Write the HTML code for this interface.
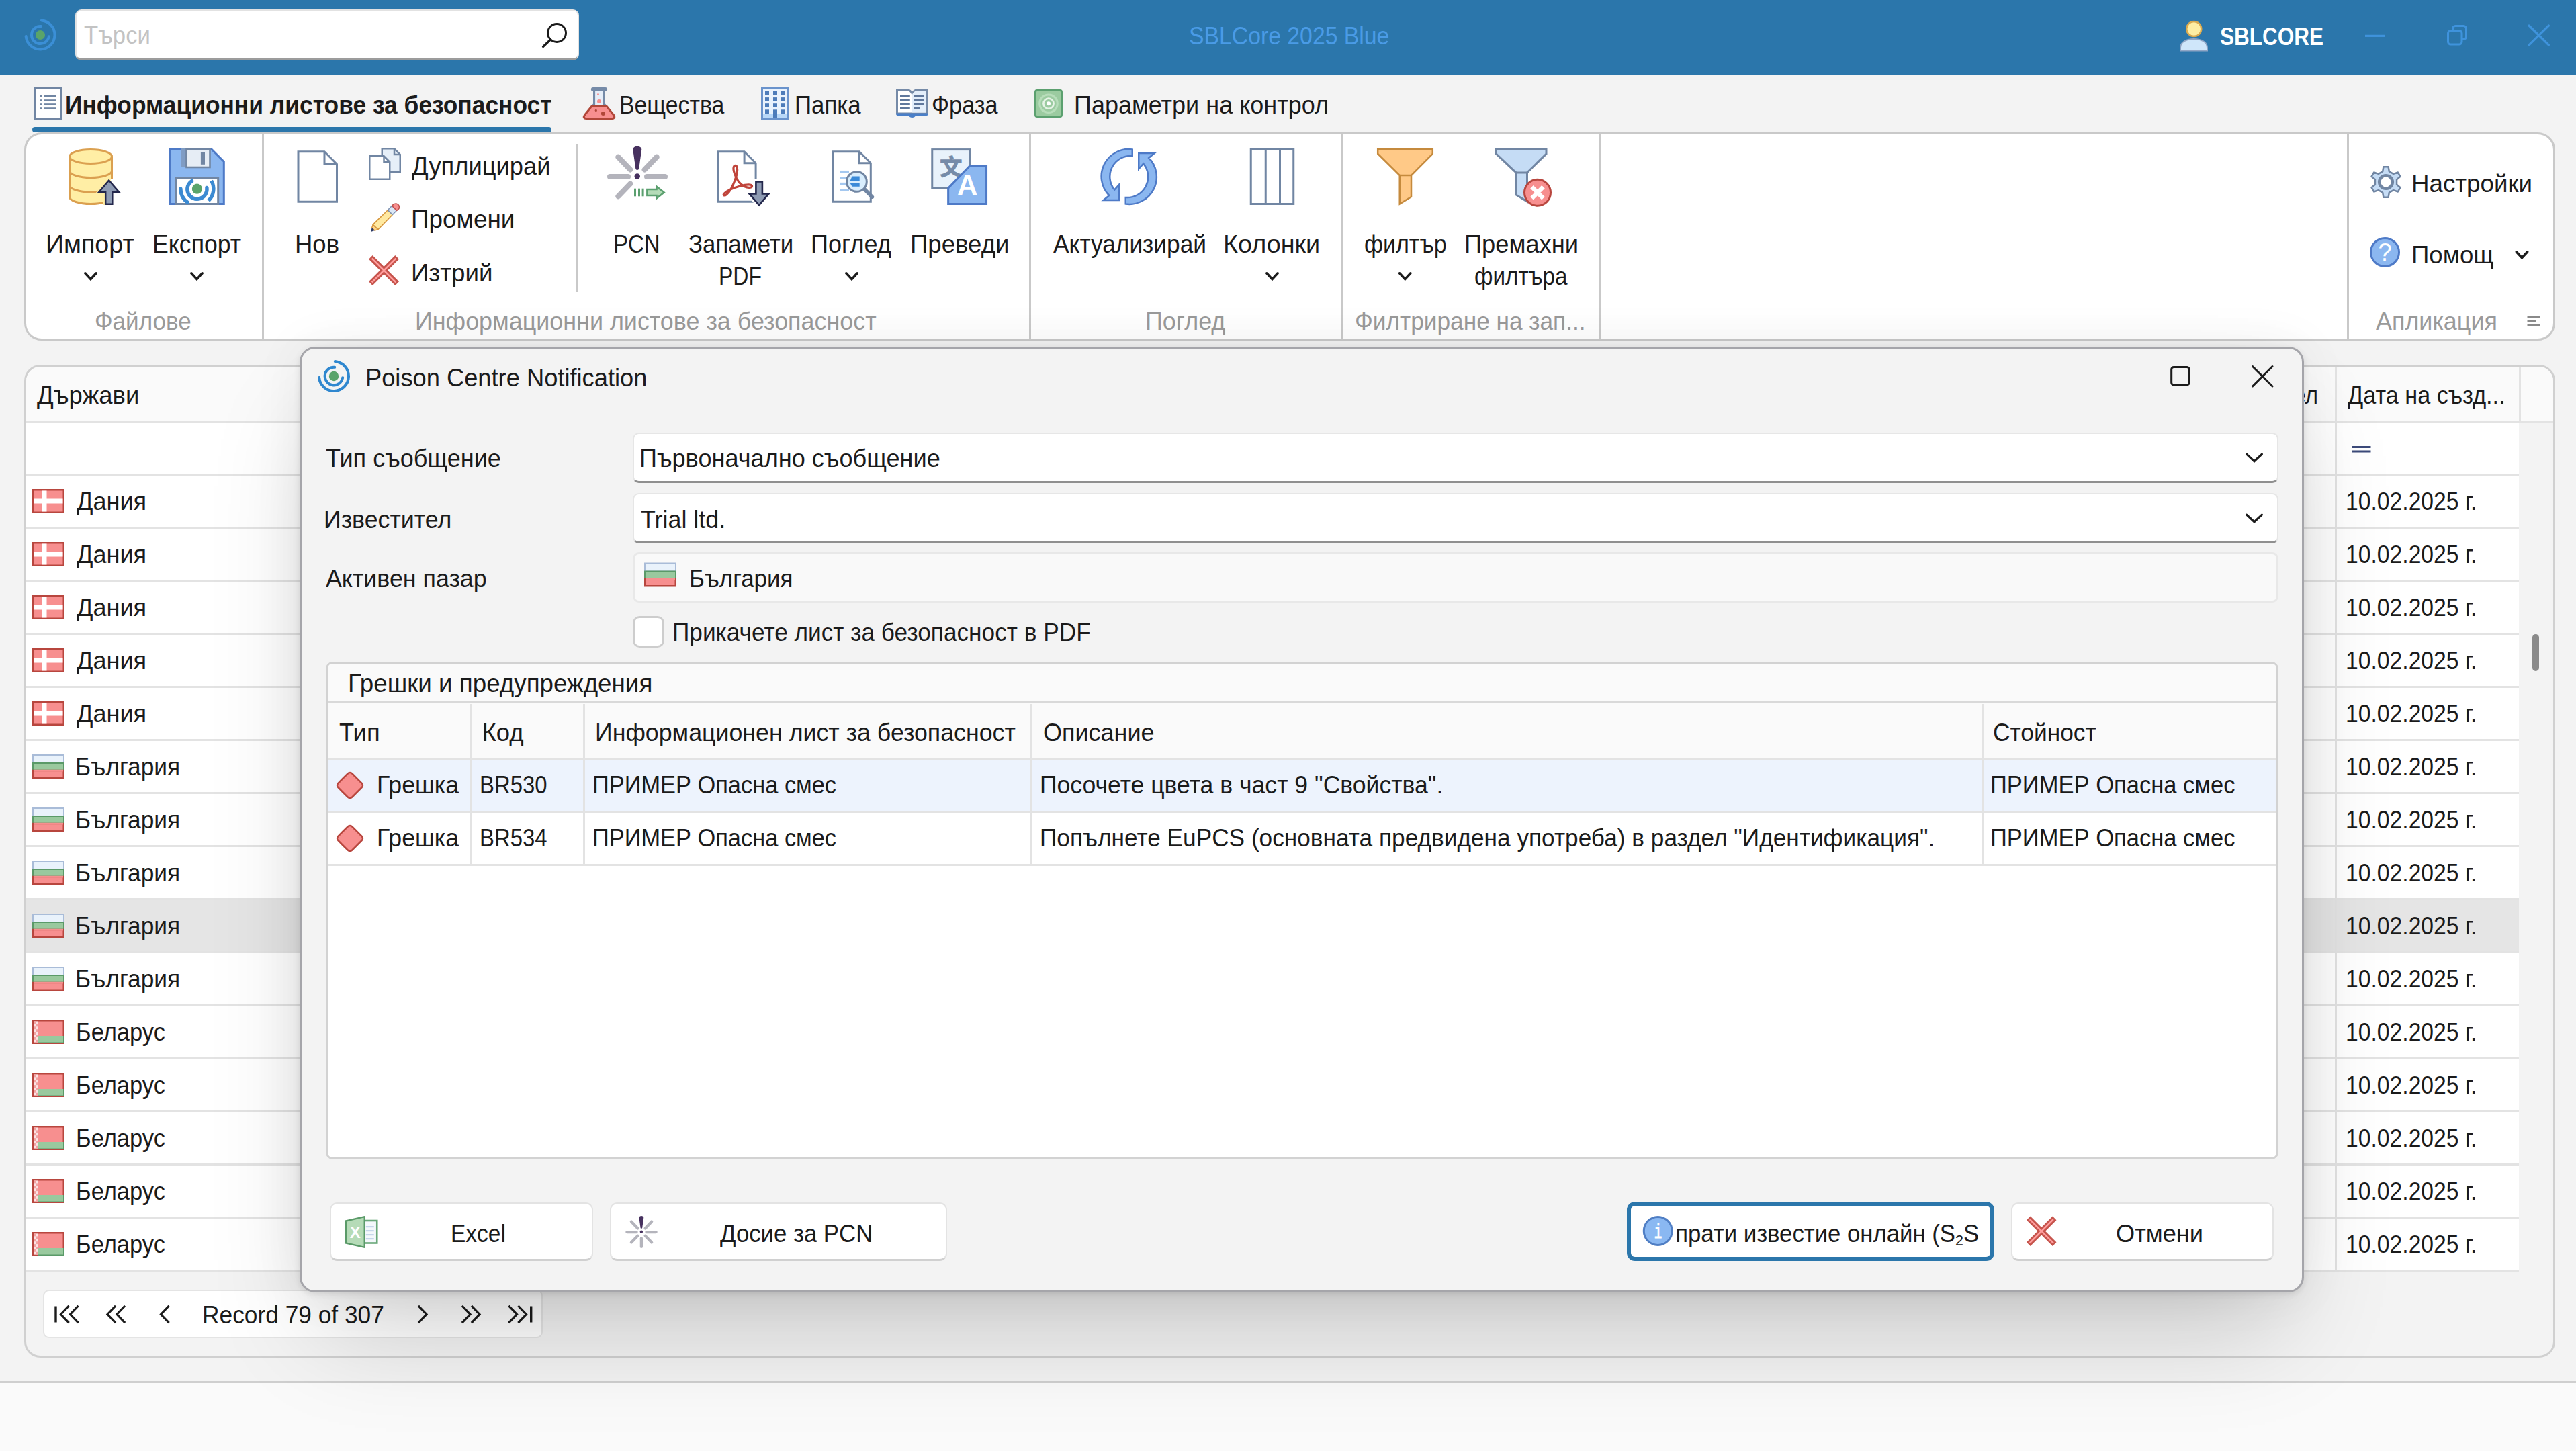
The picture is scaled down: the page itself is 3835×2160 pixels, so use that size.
<!DOCTYPE html><html lang="bg"><head><meta charset="utf-8"><title>SBLCore 2025 Blue</title><style>

html,body{margin:0;padding:0}
html{width:3835px;height:2160px;overflow:hidden}
body{width:3835px;height:2160px;overflow:hidden;background:#f3f3f3;position:relative;font-family:"Liberation Sans", sans-serif;color:#1b1b1b}
.b{position:absolute;box-sizing:border-box}
.t{position:absolute;white-space:pre;line-height:1;transform-origin:0 0;display:block}
svg{position:absolute;left:0;top:0;overflow:visible}
svg text{font-family:"Liberation Sans", sans-serif}
.clip{position:absolute;overflow:hidden}
.pre{position:absolute;right:100%}
.suf{position:absolute;left:100%}

</style></head><body>
<!-- background window -->
<div class="b" style="left:0px;top:0px;width:3835px;height:112px;background:#2b76ab"></div>
<div class="b" style="left:112px;top:14px;width:750px;height:75.5px;background:#fff;border-radius:9px;border:2px solid #e2e2e2;border-bottom:3px solid #9c9c9c"></div>
<div class="b" style="left:48px;top:188.5px;width:773px;height:8.0px;background:#2b76ab;border-radius:4px"></div>
<div class="b" style="left:36px;top:197px;width:3768px;height:309.5px;background:#fff;border:3px solid #c9c9c9;border-radius:26px"></div>
<div class="b" style="left:390px;top:200px;width:3px;height:303.5px;background:#c9c9c9"></div>
<div class="b" style="left:1532px;top:200px;width:3px;height:303.5px;background:#c9c9c9"></div>
<div class="b" style="left:1996px;top:200px;width:3px;height:303.5px;background:#c9c9c9"></div>
<div class="b" style="left:2380px;top:200px;width:3px;height:303.5px;background:#c9c9c9"></div>
<div class="b" style="left:3494px;top:200px;width:3px;height:303.5px;background:#c9c9c9"></div>
<div class="b" style="left:857px;top:214px;width:3px;height:220px;background:#c9c9c9"></div>
<div class="b" style="left:36px;top:543px;width:3768px;height:1477.5px;background:#f3f3f3;border:3px solid #d0d0d0;border-radius:24px;overflow:hidden"><div class="b" style="left:0px;top:0px;width:3762px;height:80px;background:#fafafa"></div><div class="b" style="left:0px;top:80px;width:3762px;height:3px;background:#e3e3e3"></div><div class="b" style="left:3437px;top:0px;width:3px;height:80px;background:#e3e3e3"></div><div class="b" style="left:3711px;top:0px;width:3px;height:80px;background:#e3e3e3"></div><div class="b" style="left:0px;top:83px;width:3711px;height:76px;background:#fff"></div><div class="b" style="left:0px;top:159px;width:3711px;height:3px;background:#e3e3e3"></div><div class="b" style="left:0px;top:162px;width:3711px;height:76px;background:#fff"></div><div class="b" style="left:0px;top:238px;width:3711px;height:3px;background:#e3e3e3"></div><div class="b" style="left:0px;top:241px;width:3711px;height:76px;background:#fff"></div><div class="b" style="left:0px;top:317px;width:3711px;height:3px;background:#e3e3e3"></div><div class="b" style="left:0px;top:320px;width:3711px;height:76px;background:#fff"></div><div class="b" style="left:0px;top:396px;width:3711px;height:3px;background:#e3e3e3"></div><div class="b" style="left:0px;top:399px;width:3711px;height:76px;background:#fff"></div><div class="b" style="left:0px;top:475px;width:3711px;height:3px;background:#e3e3e3"></div><div class="b" style="left:0px;top:478px;width:3711px;height:76px;background:#fff"></div><div class="b" style="left:0px;top:554px;width:3711px;height:3px;background:#e3e3e3"></div><div class="b" style="left:0px;top:557px;width:3711px;height:76px;background:#fff"></div><div class="b" style="left:0px;top:633px;width:3711px;height:3px;background:#e3e3e3"></div><div class="b" style="left:0px;top:636px;width:3711px;height:76px;background:#fff"></div><div class="b" style="left:0px;top:712px;width:3711px;height:3px;background:#e3e3e3"></div><div class="b" style="left:0px;top:715px;width:3711px;height:76px;background:#fff"></div><div class="b" style="left:0px;top:791px;width:3711px;height:3px;background:#e3e3e3"></div><div class="b" style="left:0px;top:794px;width:3711px;height:76px;background:#e5e5e5"></div><div class="b" style="left:0px;top:870px;width:3711px;height:3px;background:#e3e3e3"></div><div class="b" style="left:0px;top:873px;width:3711px;height:76px;background:#fff"></div><div class="b" style="left:0px;top:949px;width:3711px;height:3px;background:#e3e3e3"></div><div class="b" style="left:0px;top:952px;width:3711px;height:76px;background:#fff"></div><div class="b" style="left:0px;top:1028px;width:3711px;height:3px;background:#e3e3e3"></div><div class="b" style="left:0px;top:1031px;width:3711px;height:76px;background:#fff"></div><div class="b" style="left:0px;top:1107px;width:3711px;height:3px;background:#e3e3e3"></div><div class="b" style="left:0px;top:1110px;width:3711px;height:76px;background:#fff"></div><div class="b" style="left:0px;top:1186px;width:3711px;height:3px;background:#e3e3e3"></div><div class="b" style="left:0px;top:1189px;width:3711px;height:76px;background:#fff"></div><div class="b" style="left:0px;top:1265px;width:3711px;height:3px;background:#e3e3e3"></div><div class="b" style="left:0px;top:1268px;width:3711px;height:76px;background:#fff"></div><div class="b" style="left:0px;top:1344px;width:3711px;height:3px;background:#e3e3e3"></div><div class="b" style="left:3437px;top:83px;width:3px;height:1264px;background:#e3e3e3"></div><div class="b" style="left:3731px;top:398px;width:10px;height:55px;background:#8a8a8a;border-radius:5px"></div><div class="b" style="left:25px;top:1374px;width:744px;height:72px;background:#fff;border:2.5px solid #e4e4e4;border-radius:9px"></div></div>
<div class="b" style="left:0px;top:2059px;width:3835px;height:101px;background:#fafafa"></div>
<div class="b" style="left:0px;top:2056px;width:3835px;height:3px;background:#cfcfcf"></div>
<svg width="3835" height="2160" viewBox="0 0 3835 2160"><g transform="translate(60,52)"><path d="M1.87,-21.42A21.50,21.50 0 1 1 -21.42,1.87" fill="none" stroke="#3b8fd6" stroke-width="4.00" stroke-linecap="round"/><path d="M12.84,2.26A13.04,13.04 0 1 1 1.14,-12.99" fill="none" stroke="#3b8fd6" stroke-width="4.00" stroke-linecap="round"/><circle r="7.05" fill="#5aa46a"/></g>
<circle cx="829" cy="49" r="13.5" fill="none" stroke="#1b1b1b" stroke-width="3"/><line x1="819.5" y1="59" x2="808.5" y2="69.5" stroke="#1b1b1b" stroke-width="3.2" stroke-linecap="round"/>
<g transform="translate(3245,31)"><path d="M1,44.5V40C1,32 9,27 21,27S41,32 41,40V44.5Z" fill="#cfe6fa" stroke="#8fa5c5" stroke-width="2"/><circle cx="21.25" cy="12" r="11" fill="#ffeea3" stroke="#d9a94f" stroke-width="2.5"/></g>
<rect x="3521" y="51.75" width="30" height="3.2" fill="#3f93dc"/>
<rect x="3651.5" y="38.5" width="20" height="20" rx="4" fill="none" stroke="#3f93dc" stroke-width="3"/>
<rect x="3644.5" y="45.5" width="20.5" height="20.5" rx="4" fill="#2b76ab" stroke="#3f93dc" stroke-width="3"/>
<path d="M3765,38L3794.5,67M3794.5,38L3765,67" stroke="#3f93dc" stroke-width="3.2" stroke-linecap="round"/>
<g transform="translate(50,130)"><rect x="1.5" y="1.5" width="39" height="45" fill="#fff" stroke="#7186a3" stroke-width="3"/><rect x="9" y="11.7" width="3" height="2.8" fill="#7186a3"/><rect x="15" y="11.7" width="18" height="2.8" fill="#7186a3"/><rect x="9" y="18.2" width="3" height="2.8" fill="#7186a3"/><rect x="15" y="18.2" width="18" height="2.8" fill="#7186a3"/><rect x="9" y="24.2" width="3" height="2.8" fill="#7186a3"/><rect x="15" y="24.2" width="18" height="2.8" fill="#7186a3"/><rect x="9" y="30.2" width="3" height="2.8" fill="#7186a3"/><rect x="15" y="30.2" width="18" height="2.8" fill="#7186a3"/></g>
<g transform="translate(867.5,130)"><rect x="18.5" y="4" width="12" height="25" fill="#e6eef8"/><rect x="15.5" y="4" width="3.1" height="22" fill="#768ba8"/><rect x="30.4" y="4" width="3.1" height="22" fill="#768ba8"/><path d="M15.5,24.5L11.5,29H16L18.6,26Z" fill="#768ba8"/><path d="M33.5,24.5L37.5,29H33L30.4,26Z" fill="#768ba8"/><rect x="12.4" y="0" width="24.2" height="6" rx="3" fill="#768ba8"/><path d="M13,28.6H36L46.3,41.5C48.3,44.5 46.5,46.5 44,46.5H5C2.5,46.5 0.7,44.5 2.7,41.5Z" fill="#f78f8f" stroke="#b04638" stroke-width="3" stroke-linejoin="round"/><circle cx="24.5" cy="21" r="3" fill="#f78f8f"/><circle cx="23" cy="10.5" r="1.5" fill="#f78f8f"/><circle cx="30.4" cy="39" r="3" fill="#b04638"/><circle cx="19.8" cy="34.4" r="1.6" fill="#b04638"/></g>
<g transform="translate(1133,130)"><rect x="1.5" y="1.5" width="39" height="45" fill="#e8f2fd" stroke="#6a93cc" stroke-width="3"/><rect x="3" y="39" width="36" height="6" fill="#b9d8f8"/><rect x="6" y="6.0" width="6" height="5.8" fill="#4d7cba"/><rect x="18" y="6.0" width="6" height="5.8" fill="#4d7cba"/><rect x="30" y="6.0" width="6" height="5.8" fill="#4d7cba"/><rect x="6" y="15.1" width="6" height="5.8" fill="#4d7cba"/><rect x="18" y="15.1" width="6" height="5.8" fill="#4d7cba"/><rect x="30" y="15.1" width="6" height="5.8" fill="#4d7cba"/><rect x="6" y="24.2" width="6" height="5.8" fill="#4d7cba"/><rect x="18" y="24.2" width="6" height="5.8" fill="#4d7cba"/><rect x="30" y="24.2" width="6" height="5.8" fill="#4d7cba"/><rect x="6" y="33.3" width="6" height="5.8" fill="#4d7cba"/><rect x="30" y="33.3" width="6" height="5.8" fill="#4d7cba"/><rect x="18" y="33.3" width="6" height="11.7" fill="#4d7cba"/></g>
<g transform="translate(1334,132.5)"><path d="M1.5,1.5H17C20,1.5 22,3 24,6.5C26,3 28,1.5 31,1.5H46.5V36.5H1.5Z" fill="#fff" stroke="#768ba8" stroke-width="3" stroke-linejoin="miter"/><path d="M24,8C26,4.5 28,3 31,3H45V35H24Z" fill="#e3eefa"/><path d="M0.3,36H47.7V37.5C47.7,38.8 46.8,39.5 45.5,39.5H29C28,43.4 20,43.4 19,39.5H2.5C1.2,39.5 0.3,38.8 0.3,37.5Z" fill="#4a7fc8"/><rect x="6" y="9.5" width="14.8" height="3" fill="#60789c"/><rect x="27" y="9.5" width="14.8" height="3" fill="#60789c"/><rect x="6" y="15.5" width="14.8" height="3" fill="#60789c"/><rect x="27" y="15.5" width="14.8" height="3" fill="#60789c"/><rect x="6" y="21.5" width="14.8" height="3" fill="#60789c"/><rect x="27" y="21.5" width="14.8" height="3" fill="#60789c"/><rect x="6" y="27.5" width="14.8" height="3" fill="#60789c"/><rect x="27" y="27.5" width="8.8" height="3" fill="#60789c"/></g>
<g transform="translate(1540,133)"><rect x="1.5" y="1.5" width="39" height="39" rx="2.5" fill="#9bcba0" stroke="#5ba06f" stroke-width="3"/><circle cx="21" cy="21.2" r="13.2" fill="none" stroke="#b7ddba" stroke-width="3.2"/><circle cx="21" cy="21.2" r="7.6" fill="none" stroke="#e6f3e6" stroke-width="2.6"/><circle cx="21" cy="21.2" r="3" fill="#fff"/></g>
<g transform="translate(100,221)"><path d="M3.5,12V72C3.5,78 18,82.5 35,82.5S66.5,78 66.5,72V12" fill="#ffeea5" stroke="#dba050" stroke-width="3"/><ellipse cx="35" cy="12" rx="31.5" ry="10.5" fill="#ffeea5" stroke="#dba050" stroke-width="3"/><path d="M3.5,33C3.5,39 18,43.5 35,43.5S66.5,39 66.5,33" fill="none" stroke="#dba050" stroke-width="3"/><path d="M3.5,54.5C3.5,60.5 18,65 35,65S66.5,60.5 66.5,54.5" fill="none" stroke="#dba050" stroke-width="3"/><rect x="64.5" y="46" width="4" height="39" fill="#fff"/><path d="M62.2,43.5L65,46.7V84H53.7V68.3H41Z" fill="#ffeea5"/><path d="M62.2,47.5L77,64.8H67.3V82.8H57.2V64.8H47.5Z" fill="#8e9bb3" stroke="#23274c" stroke-width="2.5" stroke-linejoin="miter"/></g>
<g transform="translate(251,221)"><path d="M1.5,1.5H64.3L82.3,19.5V82.5H1.5Z" fill="#8bb7f0" stroke="#4e7ac7" stroke-width="3"/><rect x="18.2" y="0" width="9" height="28" fill="#7f9cc4"/><rect x="26.5" y="1.3" width="35" height="26.7" fill="#e6edf5" stroke="#7186a3" stroke-width="2.6"/><rect x="47.9" y="6" width="6.1" height="17.8" fill="#7186a3"/><rect x="10.6" y="43.5" width="63.1" height="39" fill="#fff" stroke="#7186a3" stroke-width="3"/><circle cx="42.4" cy="60.2" r="7.6" fill="#5aa46a"/><path d="M34.6,48.4A14.6,14.6 0 1 0 56.9,58.5" fill="none" stroke="#3b8ad2" stroke-width="5.4" stroke-linecap="round"/><path d="M17.9,60.2A24.5,24.5 0 0 0 28.3,80.3" fill="none" stroke="#3b8ad2" stroke-width="5.4" stroke-linecap="round"/><path d="M63.6,48A24.5,24.5 0 0 1 59.4,77.8" fill="none" stroke="#3b8ad2" stroke-width="5.4" stroke-linecap="butt"/></g>
<g transform="translate(442.5,224.25)"><path d="M1.5,1.5H40.5L59.0,20V76.0H1.5Z" fill="#fff" stroke="#7186a3" stroke-width="3" stroke-linejoin="miter"/><path d="M40.5,1.5V20H59.0" fill="none" stroke="#7186a3" stroke-width="3"/></g>
<g transform="translate(549,220)"><g transform="translate(18.5,0)"><path d="M1.25,1.25H19.5L28.25,10V36.25H1.25Z" fill="#e6eff8" stroke="#7186a3" stroke-width="2.5" stroke-linejoin="miter"/><path d="M19.5,1.25V10H28.25" fill="none" stroke="#7186a3" stroke-width="2.5"/></g><g transform="translate(0,11)"><path d="M1.25,1.25H22.5L31.25,10V35.75H1.25Z" fill="#fff" stroke="#7186a3" stroke-width="2.5" stroke-linejoin="miter"/><path d="M22.5,1.25V10H31.25" fill="none" stroke="#7186a3" stroke-width="2.5"/></g></g>
<g transform="translate(551,302.5)"><path d="M2.6,36.8L4.2,31.9L12,39L6.8,40.6Z" fill="#ffd58a" stroke="#d6963c" stroke-width="1.4" stroke-linejoin="round"/><path d="M1.1,42.5L2.7,36.6L7,40.6Z" fill="#2d3a66"/><path d="M4.2,31.9L26.3,10.2L33.4,17L12,39Z" fill="#ffe9a0" stroke="#d6963c" stroke-width="1.6" stroke-linejoin="round"/><path d="M26.3,10.2L32.5,3.8L39.6,10.8L33.4,17Z" fill="#dbe7f6" stroke="#7f93b3" stroke-width="1.6" stroke-linejoin="round"/><path d="M32.5,3.8L34.5,1.9C37,-0.4 41,0.3 42.6,3C44,5.5 43.5,8 41.5,9.5L39.6,10.8Z" fill="#f78f8f" stroke="#c0504d" stroke-width="1.6" stroke-linejoin="round"/></g>
<g transform="translate(549,380)"><g transform="translate(22.5,22.5) rotate(45)"><rect x="-27.81" y="-4.00" width="55.63" height="8" fill="#c6544c"/></g><g transform="translate(22.5,22.5) rotate(-45)"><rect x="-27.81" y="-4.00" width="55.63" height="8" fill="#c6544c"/></g><g transform="translate(22.5,22.5) rotate(45)"><rect x="-25.21" y="-1.30" width="50.43" height="2.6" fill="#ff9d9d"/></g><g transform="translate(22.5,22.5) rotate(-45)"><rect x="-25.21" y="-1.30" width="50.43" height="2.6" fill="#ff9d9d"/></g></g>
<g transform="translate(904,217.5)"><line x1="4" y1="45.5" x2="31" y2="45.5" stroke="#b4b4bc" stroke-width="8" stroke-linecap="round"/><line x1="59" y1="45.5" x2="86" y2="45.5" stroke="#b4b4bc" stroke-width="8" stroke-linecap="round"/><line x1="16.4" y1="16.2" x2="34.4" y2="34.9" stroke="#b4b4bc" stroke-width="8" stroke-linecap="round"/><line x1="73.6" y1="16.2" x2="55.6" y2="34.9" stroke="#b4b4bc" stroke-width="8" stroke-linecap="round"/><line x1="16.4" y1="74.8" x2="34.4" y2="56.1" stroke="#b4b4bc" stroke-width="8" stroke-linecap="round"/><path d="M38.25,5C38.25,-1.5 51.25,-1.5 51.25,5L47.25,33.5C46.75,36 42.75,36 42.25,33.5Z" fill="#47315f"/><circle cx="44.75" cy="45.0" r="4.2" fill="#47315f"/><rect x="40" y="63.2" width="3" height="11.6" fill="#5ba06f"/><rect x="46" y="63.2" width="3" height="11.6" fill="#5ba06f"/><rect x="51.6" y="63.2" width="3" height="11.6" fill="#5ba06f"/><path d="M59.4,64.5H73.5V60.2L84.6,69L73.5,77.8V73.5H59.4Z" fill="#b5dcb8" stroke="#5ba06f" stroke-width="2.6" stroke-linejoin="miter"/></g>
<g transform="translate(1067,224.25)"><path d="M1.5,1.5H41.1L58.1,18.5V76.0H1.5Z" fill="#fff" stroke="#7186a3" stroke-width="3" stroke-linejoin="miter"/><path d="M41.1,1.5V18.5H58.1" fill="none" stroke="#7186a3" stroke-width="3"/><path d="M28,22C24.5,22 24,27.5 26.5,34C29,42 34,50 41.5,53.5C46.5,56 53.5,55.5 52.5,52.5C51.5,49.5 43,50.5 34,53C25,55.5 14.5,60 11,64C8.5,67 12,67.5 14.5,65.5C20.5,60.5 26,48 29,38.5C31.5,30 31,22 28,22Z" fill="none" stroke="#c0443a" stroke-width="3.2" stroke-linejoin="round"/><path d="M58.4,46.2H67.9V64.2H77.5L63.1,81L48.5,64.2H58.4Z" fill="#fff" stroke="#fff" stroke-width="8" stroke-linejoin="miter"/><path d="M58.4,46.2H67.9V64.2H77.5L63.1,81L48.5,64.2H58.4Z" fill="#8e9bb3" stroke="#23274c" stroke-width="2.6" stroke-linejoin="miter"/></g>
<g transform="translate(1238,224.25)"><path d="M1.5,1.5H41.3L58.3,18.5V76.0H1.5Z" fill="#fff" stroke="#7186a3" stroke-width="3" stroke-linejoin="miter"/><path d="M41.3,1.5V18.5H58.3" fill="none" stroke="#7186a3" stroke-width="3"/><rect x="12" y="29.7" width="14" height="3.2" fill="#a4c8f0"/><rect x="12" y="38.8" width="14" height="3.2" fill="#a4c8f0"/><rect x="12" y="47.6" width="14" height="3.2" fill="#a4c8f0"/><rect x="12" y="56.8" width="14" height="3.2" fill="#a4c8f0"/><line x1="49.5" y1="58" x2="60.4" y2="68.9" stroke="#7186a3" stroke-width="5.6" stroke-linecap="round"/><circle cx="37.4" cy="46.2" r="14.9" fill="#d8edfd" stroke="#7186a3" stroke-width="3"/><path d="M30.5,38.3H41.7V45.3H27.5Z" fill="#3a8ad8"/><path d="M27.5,48.2H41.7V53.6H30.5Z" fill="#3a8ad8"/></g>
<g transform="translate(1385.75,221)"><rect x="2" y="1.6" width="56.7" height="56.9" fill="#e8f2fb" stroke="#7186a3" stroke-width="3"/><text x="30.1" y="39.5" font-size="34" font-weight="900" text-anchor="middle" fill="#768ba8" style="font-family:'Noto Sans CJK SC','Liberation Sans',sans-serif">文</text><path d="M58.3,25.6H82.8V82.4H25.9V59.2Z" fill="#8bb7f0" stroke="#4e7ac7" stroke-width="3" stroke-linejoin="miter"/><text x="54.4" y="69.2" font-size="42" font-weight="700" text-anchor="middle" fill="#fff">A</text></g>
<g transform="translate(1638.75,221)"><path d="M47,1.5A40.5,40.5 0 0 0 12.5,70L4,77H27.5V53.5L20.5,61.5A31,31 0 0 1 47,11Z" fill="#8bb7f0" stroke="#4e7ac7" stroke-width="2.5" stroke-linejoin="miter"/><path d="M37,82.5A40.5,40.5 0 0 0 71.5,14L80,7H56.5V30.5L63.5,22.5A31,31 0 0 1 37,73Z" fill="#8bb7f0" stroke="#4e7ac7" stroke-width="2.5" stroke-linejoin="miter"/></g>
<g transform="translate(1860.75,221)"><rect x="1.5" y="1.5" width="63.5" height="81" fill="#fff" stroke="#7186a3" stroke-width="3"/><line x1="23.5" y1="1.5" x2="23.5" y2="82.5" stroke="#7186a3" stroke-width="3"/><line x1="44.75" y1="1.5" x2="44.75" y2="82.5" stroke="#7186a3" stroke-width="3"/></g>
<g transform="translate(2050,221)"><path d="M1.2,1.2H82.8V8L51,40V72L33.75,82.5V40L1.2,8Z" fill="#ffc987" stroke="#c58a3d" stroke-width="2.5" stroke-linejoin="miter"/><line x1="33.75" y1="40" x2="51" y2="40" stroke="#c58a3d" stroke-width="2.5"/></g>
<g transform="translate(2226,221)"><path d="M1.5,1.5H76V8L47.5,36V79L31,69V36L1.5,8Z" fill="#c5dcf5" stroke="#7186a3" stroke-width="3" stroke-linejoin="miter"/><line x1="31" y1="36" x2="47.5" y2="36" stroke="#7186a3" stroke-width="3"/><circle cx="63" cy="65.75" r="19.5" fill="#f78f8f" stroke="#b8463e" stroke-width="3"/><path d="M54.5,57.25L71.5,74.25M71.5,57.25L54.5,74.25" stroke="#fff" stroke-width="6.5"/></g>
<g transform="translate(3530,247)"><path d="M17.18,8.22L18.40,1.28L25.60,1.28L26.82,8.22L33.25,11.93L39.87,9.53L43.47,15.76L38.08,20.29L38.08,27.71L43.47,32.24L39.87,38.47L33.25,36.07L26.82,39.78L25.60,46.72L18.40,46.72L17.18,39.78L10.75,36.07L4.13,38.47L0.53,32.24L5.92,27.71L5.92,20.29L0.53,15.76L4.13,9.53L10.75,11.93Z" fill="#c5dcf5" stroke="#7186a3" stroke-width="2.5" stroke-linejoin="round"/><circle cx="22" cy="24" r="9.8" fill="#fff" stroke="#7186a3" stroke-width="4.6"/></g>
<g transform="translate(3528,353)"><circle cx="22.5" cy="22.5" r="21" fill="#8bb7f0" stroke="#4e7ac7" stroke-width="3"/><text x="22.5" y="35" font-size="36" text-anchor="middle" fill="#fff">?</text></g>
<g transform="translate(125,405)"><path d="M1.8,1.8L10.0,10.7L18.2,1.8" fill="none" stroke="#1b1b1b" stroke-width="3.6" stroke-linecap="round" stroke-linejoin="miter"/></g>
<g transform="translate(283,405)"><path d="M1.8,1.8L10.0,10.7L18.2,1.8" fill="none" stroke="#1b1b1b" stroke-width="3.6" stroke-linecap="round" stroke-linejoin="miter"/></g>
<g transform="translate(1258,405)"><path d="M1.8,1.8L10.0,10.7L18.2,1.8" fill="none" stroke="#1b1b1b" stroke-width="3.6" stroke-linecap="round" stroke-linejoin="miter"/></g>
<g transform="translate(1884,405)"><path d="M1.8,1.8L10.0,10.7L18.2,1.8" fill="none" stroke="#1b1b1b" stroke-width="3.6" stroke-linecap="round" stroke-linejoin="miter"/></g>
<g transform="translate(2081.75,405)"><path d="M1.8,1.8L10.0,10.7L18.2,1.8" fill="none" stroke="#1b1b1b" stroke-width="3.6" stroke-linecap="round" stroke-linejoin="miter"/></g>
<g transform="translate(3744.5,373)"><path d="M1.8,1.8L10.0,10.7L18.2,1.8" fill="none" stroke="#1b1b1b" stroke-width="3.6" stroke-linecap="round" stroke-linejoin="miter"/></g>
<rect x="3762.5" y="470.5" width="19" height="2.6" fill="#8a8a8a"/>
<rect x="3762.5" y="476.5" width="13" height="2.6" fill="#8a8a8a"/>
<rect x="3762.5" y="482.5" width="19" height="2.6" fill="#8a8a8a"/>
<rect x="3502" y="664" width="27.5" height="3" fill="#3c4a7a"/><rect x="3502" y="670.5" width="27.5" height="3" fill="#3c4a7a"/>
<g transform="translate(48,728)"><rect x="1.25" y="1.25" width="45.5" height="33.5" fill="#f78f8f" stroke="#b8463e" stroke-width="2.5"/><rect x="14.5" y="2.5" width="7" height="31" fill="#fff"/><rect x="2.5" y="14.5" width="43" height="7" fill="#fff"/></g>
<g transform="translate(48,807)"><rect x="1.25" y="1.25" width="45.5" height="33.5" fill="#f78f8f" stroke="#b8463e" stroke-width="2.5"/><rect x="14.5" y="2.5" width="7" height="31" fill="#fff"/><rect x="2.5" y="14.5" width="43" height="7" fill="#fff"/></g>
<g transform="translate(48,886)"><rect x="1.25" y="1.25" width="45.5" height="33.5" fill="#f78f8f" stroke="#b8463e" stroke-width="2.5"/><rect x="14.5" y="2.5" width="7" height="31" fill="#fff"/><rect x="2.5" y="14.5" width="43" height="7" fill="#fff"/></g>
<g transform="translate(48,965)"><rect x="1.25" y="1.25" width="45.5" height="33.5" fill="#f78f8f" stroke="#b8463e" stroke-width="2.5"/><rect x="14.5" y="2.5" width="7" height="31" fill="#fff"/><rect x="2.5" y="14.5" width="43" height="7" fill="#fff"/></g>
<g transform="translate(48,1044)"><rect x="1.25" y="1.25" width="45.5" height="33.5" fill="#f78f8f" stroke="#b8463e" stroke-width="2.5"/><rect x="14.5" y="2.5" width="7" height="31" fill="#fff"/><rect x="2.5" y="14.5" width="43" height="7" fill="#fff"/></g>
<g transform="translate(48,1123)"><rect x="1" y="1" width="46" height="12" fill="#e9f2fb" stroke="#a9bcd8" stroke-width="2"/><rect x="1" y="13" width="46" height="11" fill="#99c99e" stroke="#5a9a68" stroke-width="2"/><rect x="1.25" y="24" width="45.5" height="10.75" fill="#f78f8f" stroke="#b8463e" stroke-width="2.5"/><rect x="2" y="23" width="44" height="2.5" fill="#f78f8f"/></g>
<g transform="translate(48,1202)"><rect x="1" y="1" width="46" height="12" fill="#e9f2fb" stroke="#a9bcd8" stroke-width="2"/><rect x="1" y="13" width="46" height="11" fill="#99c99e" stroke="#5a9a68" stroke-width="2"/><rect x="1.25" y="24" width="45.5" height="10.75" fill="#f78f8f" stroke="#b8463e" stroke-width="2.5"/><rect x="2" y="23" width="44" height="2.5" fill="#f78f8f"/></g>
<g transform="translate(48,1281)"><rect x="1" y="1" width="46" height="12" fill="#e9f2fb" stroke="#a9bcd8" stroke-width="2"/><rect x="1" y="13" width="46" height="11" fill="#99c99e" stroke="#5a9a68" stroke-width="2"/><rect x="1.25" y="24" width="45.5" height="10.75" fill="#f78f8f" stroke="#b8463e" stroke-width="2.5"/><rect x="2" y="23" width="44" height="2.5" fill="#f78f8f"/></g>
<g transform="translate(48,1360)"><rect x="1" y="1" width="46" height="12" fill="#e9f2fb" stroke="#a9bcd8" stroke-width="2"/><rect x="1" y="13" width="46" height="11" fill="#99c99e" stroke="#5a9a68" stroke-width="2"/><rect x="1.25" y="24" width="45.5" height="10.75" fill="#f78f8f" stroke="#b8463e" stroke-width="2.5"/><rect x="2" y="23" width="44" height="2.5" fill="#f78f8f"/></g>
<g transform="translate(48,1439)"><rect x="1" y="1" width="46" height="12" fill="#e9f2fb" stroke="#a9bcd8" stroke-width="2"/><rect x="1" y="13" width="46" height="11" fill="#99c99e" stroke="#5a9a68" stroke-width="2"/><rect x="1.25" y="24" width="45.5" height="10.75" fill="#f78f8f" stroke="#b8463e" stroke-width="2.5"/><rect x="2" y="23" width="44" height="2.5" fill="#f78f8f"/></g>
<g transform="translate(48,1518)"><rect x="1.25" y="1.25" width="45.5" height="33.5" fill="#f78f8f" stroke="#b8463e" stroke-width="2.5"/><rect x="9" y="24" width="38" height="10.5" fill="#99c99e"/><path d="M9,34.25H46.75V24" fill="none" stroke="#5a9a68" stroke-width="1.5"/><rect x="2.5" y="2.5" width="6.5" height="31" fill="#fbe3e3"/><rect x="2.5" y="2.5" width="3.2" height="3.9" fill="#f2a3a3"/><rect x="5.7" y="6.4" width="3.2" height="3.9" fill="#f2a3a3"/><rect x="2.5" y="10.3" width="3.2" height="3.9" fill="#f2a3a3"/><rect x="5.7" y="14.2" width="3.2" height="3.9" fill="#f2a3a3"/><rect x="2.5" y="18.1" width="3.2" height="3.9" fill="#f2a3a3"/><rect x="5.7" y="22.0" width="3.2" height="3.9" fill="#f2a3a3"/><rect x="2.5" y="25.9" width="3.2" height="3.9" fill="#f2a3a3"/><rect x="5.7" y="29.8" width="3.2" height="3.9" fill="#f2a3a3"/></g>
<g transform="translate(48,1597)"><rect x="1.25" y="1.25" width="45.5" height="33.5" fill="#f78f8f" stroke="#b8463e" stroke-width="2.5"/><rect x="9" y="24" width="38" height="10.5" fill="#99c99e"/><path d="M9,34.25H46.75V24" fill="none" stroke="#5a9a68" stroke-width="1.5"/><rect x="2.5" y="2.5" width="6.5" height="31" fill="#fbe3e3"/><rect x="2.5" y="2.5" width="3.2" height="3.9" fill="#f2a3a3"/><rect x="5.7" y="6.4" width="3.2" height="3.9" fill="#f2a3a3"/><rect x="2.5" y="10.3" width="3.2" height="3.9" fill="#f2a3a3"/><rect x="5.7" y="14.2" width="3.2" height="3.9" fill="#f2a3a3"/><rect x="2.5" y="18.1" width="3.2" height="3.9" fill="#f2a3a3"/><rect x="5.7" y="22.0" width="3.2" height="3.9" fill="#f2a3a3"/><rect x="2.5" y="25.9" width="3.2" height="3.9" fill="#f2a3a3"/><rect x="5.7" y="29.8" width="3.2" height="3.9" fill="#f2a3a3"/></g>
<g transform="translate(48,1676)"><rect x="1.25" y="1.25" width="45.5" height="33.5" fill="#f78f8f" stroke="#b8463e" stroke-width="2.5"/><rect x="9" y="24" width="38" height="10.5" fill="#99c99e"/><path d="M9,34.25H46.75V24" fill="none" stroke="#5a9a68" stroke-width="1.5"/><rect x="2.5" y="2.5" width="6.5" height="31" fill="#fbe3e3"/><rect x="2.5" y="2.5" width="3.2" height="3.9" fill="#f2a3a3"/><rect x="5.7" y="6.4" width="3.2" height="3.9" fill="#f2a3a3"/><rect x="2.5" y="10.3" width="3.2" height="3.9" fill="#f2a3a3"/><rect x="5.7" y="14.2" width="3.2" height="3.9" fill="#f2a3a3"/><rect x="2.5" y="18.1" width="3.2" height="3.9" fill="#f2a3a3"/><rect x="5.7" y="22.0" width="3.2" height="3.9" fill="#f2a3a3"/><rect x="2.5" y="25.9" width="3.2" height="3.9" fill="#f2a3a3"/><rect x="5.7" y="29.8" width="3.2" height="3.9" fill="#f2a3a3"/></g>
<g transform="translate(48,1755)"><rect x="1.25" y="1.25" width="45.5" height="33.5" fill="#f78f8f" stroke="#b8463e" stroke-width="2.5"/><rect x="9" y="24" width="38" height="10.5" fill="#99c99e"/><path d="M9,34.25H46.75V24" fill="none" stroke="#5a9a68" stroke-width="1.5"/><rect x="2.5" y="2.5" width="6.5" height="31" fill="#fbe3e3"/><rect x="2.5" y="2.5" width="3.2" height="3.9" fill="#f2a3a3"/><rect x="5.7" y="6.4" width="3.2" height="3.9" fill="#f2a3a3"/><rect x="2.5" y="10.3" width="3.2" height="3.9" fill="#f2a3a3"/><rect x="5.7" y="14.2" width="3.2" height="3.9" fill="#f2a3a3"/><rect x="2.5" y="18.1" width="3.2" height="3.9" fill="#f2a3a3"/><rect x="5.7" y="22.0" width="3.2" height="3.9" fill="#f2a3a3"/><rect x="2.5" y="25.9" width="3.2" height="3.9" fill="#f2a3a3"/><rect x="5.7" y="29.8" width="3.2" height="3.9" fill="#f2a3a3"/></g>
<g transform="translate(48,1834)"><rect x="1.25" y="1.25" width="45.5" height="33.5" fill="#f78f8f" stroke="#b8463e" stroke-width="2.5"/><rect x="9" y="24" width="38" height="10.5" fill="#99c99e"/><path d="M9,34.25H46.75V24" fill="none" stroke="#5a9a68" stroke-width="1.5"/><rect x="2.5" y="2.5" width="6.5" height="31" fill="#fbe3e3"/><rect x="2.5" y="2.5" width="3.2" height="3.9" fill="#f2a3a3"/><rect x="5.7" y="6.4" width="3.2" height="3.9" fill="#f2a3a3"/><rect x="2.5" y="10.3" width="3.2" height="3.9" fill="#f2a3a3"/><rect x="5.7" y="14.2" width="3.2" height="3.9" fill="#f2a3a3"/><rect x="2.5" y="18.1" width="3.2" height="3.9" fill="#f2a3a3"/><rect x="5.7" y="22.0" width="3.2" height="3.9" fill="#f2a3a3"/><rect x="2.5" y="25.9" width="3.2" height="3.9" fill="#f2a3a3"/><rect x="5.7" y="29.8" width="3.2" height="3.9" fill="#f2a3a3"/></g>
<line x1="83" y1="1944.5" x2="83" y2="1968.5" stroke="#1b1b1b" stroke-width="3.4"/>
<path d="M101.5,1945L90.5,1956.5L101.5,1968" fill="none" stroke="#1b1b1b" stroke-width="3.2" stroke-linecap="square" stroke-linejoin="miter"/>
<path d="M115.5,1945L104.5,1956.5L115.5,1968" fill="none" stroke="#1b1b1b" stroke-width="3.2" stroke-linecap="square" stroke-linejoin="miter"/>
<path d="M171.0,1945L160.0,1956.5L171.0,1968" fill="none" stroke="#1b1b1b" stroke-width="3.2" stroke-linecap="square" stroke-linejoin="miter"/>
<path d="M185.0,1945L174.0,1956.5L185.0,1968" fill="none" stroke="#1b1b1b" stroke-width="3.2" stroke-linecap="square" stroke-linejoin="miter"/>
<path d="M250.5,1945L239.5,1956.5L250.5,1968" fill="none" stroke="#1b1b1b" stroke-width="3.2" stroke-linecap="square" stroke-linejoin="miter"/>
<path d="M624.0,1945L635.0,1956.5L624.0,1968" fill="none" stroke="#1b1b1b" stroke-width="3.2" stroke-linecap="square" stroke-linejoin="miter"/>
<path d="M689.0,1945L700.0,1956.5L689.0,1968" fill="none" stroke="#1b1b1b" stroke-width="3.2" stroke-linecap="square" stroke-linejoin="miter"/>
<path d="M703.0,1945L714.0,1956.5L703.0,1968" fill="none" stroke="#1b1b1b" stroke-width="3.2" stroke-linecap="square" stroke-linejoin="miter"/>
<path d="M758.5,1945L769.5,1956.5L758.5,1968" fill="none" stroke="#1b1b1b" stroke-width="3.2" stroke-linecap="square" stroke-linejoin="miter"/>
<path d="M772.5,1945L783.5,1956.5L772.5,1968" fill="none" stroke="#1b1b1b" stroke-width="3.2" stroke-linecap="square" stroke-linejoin="miter"/>
<line x1="790.7" y1="1944.5" x2="790.7" y2="1968.5" stroke="#1b1b1b" stroke-width="3.4"/></svg>
<span class="t" id="t0" style="left:124.6px;top:34.6px;font-size:36.5px;color:#c3c3c3;transform:scaleX(0.9500);">Търси</span>
<span class="t" id="t1" style="left:1770.2px;top:35.8px;font-size:36.5px;color:#4a9be6;transform:scaleX(0.9248);">SBLCore 2025 Blue</span>
<span class="t" id="t2" style="left:3304.6px;top:37.1px;font-size:36.5px;color:#fff;font-weight:700;transform:scaleX(0.8636);">SBLCORE</span>
<span class="t" id="t3" style="left:97.1px;top:139.1px;font-size:36.5px;font-weight:700;transform:scaleX(0.9691);">Информационни листове за безопасност</span>
<span class="t" id="t4" style="left:922.4px;top:138.9px;font-size:36.5px;transform:scaleX(0.9265);">Вещества</span>
<span class="t" id="t5" style="left:1183.1px;top:138.9px;font-size:36.5px;transform:scaleX(0.9554);">Папка</span>
<span class="t" id="t6" style="left:1387.3px;top:138.9px;font-size:36.5px;transform:scaleX(0.9398);">Фраза</span>
<span class="t" id="t7" style="left:1599.0px;top:138.9px;font-size:36.5px;transform:scaleX(0.9868);">Параметри на контрол</span>
<span class="t" id="t8" style="left:67.9px;top:346.1px;font-size:36.5px;transform:scaleX(1.0320);">Импорт</span>
<span class="t" id="t9" style="left:227.1px;top:346.1px;font-size:36.5px;transform:scaleX(0.9773);">Експорт</span>
<span class="t" id="t10" style="left:439.0px;top:346.1px;font-size:36.5px;transform:scaleX(1.0000);">Нов</span>
<span class="t" id="t11" style="left:612.5px;top:230.1px;font-size:36.5px;transform:scaleX(0.9951);">Дуплицирай</span>
<span class="t" id="t12" style="left:612.0px;top:309.4px;font-size:36.5px;transform:scaleX(1.0108);">Промени</span>
<span class="t" id="t13" style="left:612.0px;top:389.1px;font-size:36.5px;transform:scaleX(1.0052);">Изтрий</span>
<span class="t" id="t14" style="left:912.8px;top:346.1px;font-size:36.5px;transform:scaleX(0.9028);">PCN</span>
<span class="t" id="t15" style="left:1024.8px;top:346.1px;font-size:36.5px;transform:scaleX(0.9547);">Запамети</span>
<span class="t" id="t16" style="left:1069.9px;top:394.1px;font-size:36.5px;transform:scaleX(0.8768);">PDF</span>
<span class="t" id="t17" style="left:1207.0px;top:346.1px;font-size:36.5px;transform:scaleX(0.9890);">Поглед</span>
<span class="t" id="t18" style="left:1354.5px;top:346.1px;font-size:36.5px;transform:scaleX(1.0035);">Преведи</span>
<span class="t" id="t19" style="left:1567.5px;top:346.1px;font-size:36.5px;transform:scaleX(0.9669);">Актуализирай</span>
<span class="t" id="t20" style="left:1821.4px;top:346.1px;font-size:36.5px;transform:scaleX(1.0354);">Колонки</span>
<span class="t" id="t21" style="left:2030.8px;top:346.1px;font-size:36.5px;transform:scaleX(0.9322);">филтър</span>
<span class="t" id="t22" style="left:2179.5px;top:346.1px;font-size:36.5px;transform:scaleX(0.9940);">Премахни</span>
<span class="t" id="t23" style="left:2195.1px;top:394.1px;font-size:36.5px;transform:scaleX(0.9123);">филтъра</span>
<span class="t" id="t24" style="left:3589.5px;top:256.1px;font-size:36.5px;transform:scaleX(1.0057);">Настройки</span>
<span class="t" id="t25" style="left:3589.5px;top:362.1px;font-size:36.5px;transform:scaleX(1.0042);">Помощ</span>
<span class="t" id="t26" style="left:141.1px;top:460.9px;font-size:36.5px;color:#9a9a9a;transform:scaleX(0.9592);">Файлове</span>
<span class="t" id="t27" style="left:617.8px;top:460.9px;font-size:36.5px;color:#9a9a9a;transform:scaleX(0.9832);">Информационни листове за безопасност</span>
<span class="t" id="t28" style="left:1704.5px;top:460.9px;font-size:36.5px;color:#9a9a9a;transform:scaleX(0.9852);">Поглед</span>
<span class="t" id="t29" style="left:2016.7px;top:460.9px;font-size:36.5px;color:#9a9a9a;transform:scaleX(0.9655);">Филтриране на зап...</span>
<span class="t" id="t30" style="left:3537.0px;top:460.9px;font-size:36.5px;color:#9a9a9a;transform:scaleX(0.9835);">Апликация</span>
<span class="t" id="t31" style="left:55.0px;top:570.9px;font-size:36.5px;transform:scaleX(1.0000);">Държави</span>
<span class="t" id="t32" style="left:3414.1px;top:570.9px;font-size:36.5px;transform:scaleX(0.9189);">ел</span>
<span class="t" id="t33" style="left:3495.0px;top:570.9px;font-size:36.5px;transform:scaleX(0.9375);">Дата на създ...</span>
<span class="t" id="t34" style="left:301.3px;top:1940.1px;font-size:36.5px;transform:scaleX(0.9674);">Record 79 of 307</span>
<span class="t" id="t35" style="left:113.8px;top:728.6px;font-size:36.5px;transform:scaleX(0.9879);">Дания</span>
<span class="t" id="t36" style="left:3491.7px;top:728.6px;font-size:36.5px;transform:scaleX(0.9227);">10.02.2025 г.</span>
<span class="t" id="t37" style="left:113.8px;top:807.6px;font-size:36.5px;transform:scaleX(0.9879);">Дания</span>
<span class="t" id="t38" style="left:3491.7px;top:807.6px;font-size:36.5px;transform:scaleX(0.9227);">10.02.2025 г.</span>
<span class="t" id="t39" style="left:113.8px;top:886.6px;font-size:36.5px;transform:scaleX(0.9879);">Дания</span>
<span class="t" id="t40" style="left:3491.7px;top:886.6px;font-size:36.5px;transform:scaleX(0.9227);">10.02.2025 г.</span>
<span class="t" id="t41" style="left:113.8px;top:965.6px;font-size:36.5px;transform:scaleX(0.9879);">Дания</span>
<span class="t" id="t42" style="left:3491.7px;top:965.6px;font-size:36.5px;transform:scaleX(0.9227);">10.02.2025 г.</span>
<span class="t" id="t43" style="left:113.8px;top:1044.6px;font-size:36.5px;transform:scaleX(0.9879);">Дания</span>
<span class="t" id="t44" style="left:3491.7px;top:1044.6px;font-size:36.5px;transform:scaleX(0.9227);">10.02.2025 г.</span>
<span class="t" id="t45" style="left:112.1px;top:1123.6px;font-size:36.5px;transform:scaleX(0.9679);">България</span>
<span class="t" id="t46" style="left:3491.7px;top:1123.6px;font-size:36.5px;transform:scaleX(0.9227);">10.02.2025 г.</span>
<span class="t" id="t47" style="left:112.1px;top:1202.6px;font-size:36.5px;transform:scaleX(0.9679);">България</span>
<span class="t" id="t48" style="left:3491.7px;top:1202.6px;font-size:36.5px;transform:scaleX(0.9227);">10.02.2025 г.</span>
<span class="t" id="t49" style="left:112.1px;top:1281.6px;font-size:36.5px;transform:scaleX(0.9679);">България</span>
<span class="t" id="t50" style="left:3491.7px;top:1281.6px;font-size:36.5px;transform:scaleX(0.9227);">10.02.2025 г.</span>
<span class="t" id="t51" style="left:112.1px;top:1360.6px;font-size:36.5px;transform:scaleX(0.9679);">България</span>
<span class="t" id="t52" style="left:3491.7px;top:1360.6px;font-size:36.5px;transform:scaleX(0.9227);">10.02.2025 г.</span>
<span class="t" id="t53" style="left:112.1px;top:1439.6px;font-size:36.5px;transform:scaleX(0.9679);">България</span>
<span class="t" id="t54" style="left:3491.7px;top:1439.6px;font-size:36.5px;transform:scaleX(0.9227);">10.02.2025 г.</span>
<span class="t" id="t55" style="left:112.7px;top:1518.6px;font-size:36.5px;transform:scaleX(0.9453);">Беларус</span>
<span class="t" id="t56" style="left:3491.7px;top:1518.6px;font-size:36.5px;transform:scaleX(0.9227);">10.02.2025 г.</span>
<span class="t" id="t57" style="left:112.7px;top:1597.6px;font-size:36.5px;transform:scaleX(0.9453);">Беларус</span>
<span class="t" id="t58" style="left:3491.7px;top:1597.6px;font-size:36.5px;transform:scaleX(0.9227);">10.02.2025 г.</span>
<span class="t" id="t59" style="left:112.7px;top:1676.6px;font-size:36.5px;transform:scaleX(0.9453);">Беларус</span>
<span class="t" id="t60" style="left:3491.7px;top:1676.6px;font-size:36.5px;transform:scaleX(0.9227);">10.02.2025 г.</span>
<span class="t" id="t61" style="left:112.7px;top:1755.6px;font-size:36.5px;transform:scaleX(0.9453);">Беларус</span>
<span class="t" id="t62" style="left:3491.7px;top:1755.6px;font-size:36.5px;transform:scaleX(0.9227);">10.02.2025 г.</span>
<span class="t" id="t63" style="left:112.7px;top:1834.6px;font-size:36.5px;transform:scaleX(0.9453);">Беларус</span>
<span class="t" id="t64" style="left:3491.7px;top:1834.6px;font-size:36.5px;transform:scaleX(0.9227);">10.02.2025 г.</span>
<!-- dialog -->
<div class="b" style="left:446px;top:516px;width:2984px;height:1408px;background:#f3f3f3;border:3px solid #a5a5aa;border-radius:23px;box-shadow:0 3px 10px rgba(0,0,0,0.10),0 0 80px rgba(0,0,0,0.06),0 80px 150px -30px rgba(0,0,0,0.19)"></div>
<div class="b" style="left:941.5px;top:643.5px;width:2450.0px;height:75.5px;background:#fff;border-radius:9px;border:2px solid #e6e6e6;border-bottom:3px solid #8f8f8f"></div>
<div class="b" style="left:941.5px;top:734px;width:2450.0px;height:74.5px;background:#fff;border-radius:9px;border:2px solid #e6e6e6;border-bottom:3px solid #8f8f8f"></div>
<div class="b" style="left:941.5px;top:821.5px;width:2450.0px;height:75.0px;background:#f9f9f9;border-radius:9px;border:3px solid #e8e8e8"></div>
<div class="b" style="left:941.5px;top:916.5px;width:47.0px;height:47.0px;background:#fff;border-radius:10px;border:3px solid #cdcdcd"></div>
<div class="b" style="left:484.5px;top:984.5px;width:2907.0px;height:741.0px;background:#fff;border:3px solid #d2d2d2;border-radius:10px;overflow:hidden"><div class="b" style="left:0.0px;top:0.0px;width:2901.0px;height:140.5px;background:#fafafa"></div><div class="b" style="left:0.0px;top:56.5px;width:2901.0px;height:3.0px;background:#d9d9d9"></div><div class="b" style="left:0.0px;top:140.5px;width:2901.0px;height:3.0px;background:#e3e3e3"></div><div class="b" style="left:0.0px;top:143.5px;width:2901.0px;height:76.0px;background:#edf3fd"></div><div class="b" style="left:0.0px;top:219.5px;width:2901.0px;height:3.0px;background:#e3e3e3"></div><div class="b" style="left:0.0px;top:298.5px;width:2901.0px;height:3.0px;background:#e3e3e3"></div><div class="b" style="left:212.5px;top:60.0px;width:3.0px;height:241.5px;background:#e3e3e3"></div><div class="b" style="left:380.5px;top:60.0px;width:3.0px;height:241.5px;background:#e3e3e3"></div><div class="b" style="left:1046.5px;top:60.0px;width:3.0px;height:241.5px;background:#e3e3e3"></div><div class="b" style="left:2462.5px;top:60.0px;width:3.0px;height:241.5px;background:#e3e3e3"></div></div>
<div class="b" style="left:491px;top:1789.5px;width:391.5px;height:87.5px;background:#fff;border-radius:11px;border:2.5px solid #e3e3e3;border-bottom:3px solid #d0d0d0"></div>
<div class="b" style="left:907.5px;top:1789.5px;width:502.5px;height:87.5px;background:#fff;border-radius:11px;border:2.5px solid #e3e3e3;border-bottom:3px solid #d0d0d0"></div>
<div class="b" style="left:2422px;top:1789px;width:547px;height:88px;background:#fff;border-radius:12px;border:6px solid #2b76ab"></div>
<div class="b" style="left:2994px;top:1789.5px;width:391px;height:87.5px;background:#fff;border-radius:11px;border:2.5px solid #e3e3e3;border-bottom:3px solid #d0d0d0"></div>
<svg width="3835" height="2160" viewBox="0 0 3835 2160"><g transform="translate(497,560)"><path d="M1.91,-21.88A21.96,21.96 0 1 1 -21.88,1.91" fill="none" stroke="#2f87cf" stroke-width="4.08" stroke-linecap="round"/><path d="M13.12,2.31A13.32,13.32 0 1 1 1.16,-13.27" fill="none" stroke="#2f87cf" stroke-width="4.08" stroke-linecap="round"/><circle r="7.20" fill="#5aa46a"/></g>
<rect x="3232.7" y="546.5" width="26.5" height="26.5" rx="3.5" fill="none" stroke="#1b1b1b" stroke-width="3"/>
<path d="M3353.5,545.5L3383,575M3383,545.5L3353.5,575" stroke="#1b1b1b" stroke-width="3" stroke-linecap="round"/>
<g transform="translate(3343,674.5)"><path d="M1.6,1.6L13.0,12.200000000000001L24.4,1.6" fill="none" stroke="#1b1b1b" stroke-width="3.2" stroke-linecap="round" stroke-linejoin="miter"/></g>
<g transform="translate(3343,764.5)"><path d="M1.6,1.6L13.0,12.200000000000001L24.4,1.6" fill="none" stroke="#1b1b1b" stroke-width="3.2" stroke-linecap="round" stroke-linejoin="miter"/></g>
<g transform="translate(959,837.5)"><rect x="1" y="1" width="46" height="12" fill="#e9f2fb" stroke="#a9bcd8" stroke-width="2"/><rect x="1" y="13" width="46" height="11" fill="#99c99e" stroke="#5a9a68" stroke-width="2"/><rect x="1.25" y="24" width="45.5" height="10.75" fill="#f78f8f" stroke="#b8463e" stroke-width="2.5"/><rect x="2" y="23" width="44" height="2.5" fill="#f78f8f"/></g>
<g transform="translate(499.5,1147.5)"><rect x="-14.7" y="-14.7" width="29.4" height="29.4" rx="4.5" transform="translate(21.5,21.5) rotate(45)" fill="#f78f8f" stroke="#b8463e" stroke-width="2.6"/></g>
<g transform="translate(499.5,1226.5)"><rect x="-14.7" y="-14.7" width="29.4" height="29.4" rx="4.5" transform="translate(21.5,21.5) rotate(45)" fill="#f78f8f" stroke="#b8463e" stroke-width="2.6"/></g>
<g transform="translate(513.75,1810)"><rect x="27" y="7" width="20.5" height="33.5" fill="#f4f8fb" stroke="#6aa87a" stroke-width="2.6"/><rect x="31" y="15" width="12" height="2.2" fill="#c5d6ea"/><rect x="31" y="21" width="12" height="2.2" fill="#c5d6ea"/><rect x="31" y="27" width="12" height="2.2" fill="#c5d6ea"/><rect x="31" y="33" width="12" height="2.2" fill="#c5d6ea"/><path d="M1.2,7.5L29,1.2V46.8L1.2,40.5Z" fill="#b5dbb7" stroke="#5a9a68" stroke-width="2.4" stroke-linejoin="miter"/><text x="15" y="33" font-size="24" font-weight="700" text-anchor="middle" fill="#fff">X</text></g>
<g transform="translate(931.25,1810)"><g transform="scale(0.528)"><line x1="4" y1="45.5" x2="31" y2="45.5" stroke="#b4b4bc" stroke-width="8" stroke-linecap="round"/><line x1="59" y1="45.5" x2="86" y2="45.5" stroke="#b4b4bc" stroke-width="8" stroke-linecap="round"/><line x1="16.4" y1="16.2" x2="34.4" y2="34.9" stroke="#b4b4bc" stroke-width="8" stroke-linecap="round"/><line x1="73.6" y1="16.2" x2="55.6" y2="34.9" stroke="#b4b4bc" stroke-width="8" stroke-linecap="round"/><line x1="16.4" y1="74.8" x2="34.4" y2="56.1" stroke="#b4b4bc" stroke-width="8" stroke-linecap="round"/><line x1="73.6" y1="74.8" x2="55.6" y2="56.1" stroke="#b4b4bc" stroke-width="8" stroke-linecap="round"/><line x1="44.75" y1="63" x2="44.75" y2="87" stroke="#b4b4bc" stroke-width="8" stroke-linecap="round"/><path d="M38.25,5C38.25,-1.5 51.25,-1.5 51.25,5L47.25,33.5C46.75,36 42.75,36 42.25,33.5Z" fill="#47315f"/><circle cx="44.75" cy="45.0" r="4.2" fill="#47315f"/></g></g>
<g transform="translate(2445.5,1810)"><circle cx="22.75" cy="22.4" r="21" fill="#8ab8f2" stroke="#4f7ec4" stroke-width="3"/><text transform="translate(22.9,33.2) scale(0.58,0.87)" x="0" y="0" font-size="33" text-anchor="middle" fill="#fff" stroke="#fff" stroke-width="1.2" style="font-family:'Liberation Mono',monospace">i</text></g>
<g transform="translate(3017,1810.5)"><g transform="translate(22.25,22.25) rotate(45)"><rect x="-27.46" y="-4.00" width="54.92" height="8" fill="#c6544c"/></g><g transform="translate(22.25,22.25) rotate(-45)"><rect x="-27.46" y="-4.00" width="54.92" height="8" fill="#c6544c"/></g><g transform="translate(22.25,22.25) rotate(45)"><rect x="-24.86" y="-1.30" width="49.72" height="2.6" fill="#ff9d9d"/></g><g transform="translate(22.25,22.25) rotate(-45)"><rect x="-24.86" y="-1.30" width="49.72" height="2.6" fill="#ff9d9d"/></g></g></svg>
<span class="t" id="t65" style="left:544.0px;top:545.1px;font-size:36.5px;transform:scaleX(0.9938);">Poison Centre Notification</span>
<span class="t" id="t66" style="left:484.5px;top:665.1px;font-size:36.5px;transform:scaleX(0.9882);">Тип съобщение</span>
<span class="t" id="t67" style="left:481.6px;top:755.6px;font-size:36.5px;transform:scaleX(0.9799);">Известител</span>
<span class="t" id="t68" style="left:485.0px;top:844.1px;font-size:36.5px;transform:scaleX(0.9805);">Активен пазар</span>
<span class="t" id="t69" style="left:952.0px;top:665.1px;font-size:36.5px;transform:scaleX(0.9895);">Първоначално съобщение</span>
<span class="t" id="t70" style="left:953.8px;top:755.6px;font-size:36.5px;transform:scaleX(0.9817);">Trial ltd.</span>
<span class="t" id="t71" style="left:1026.1px;top:844.1px;font-size:36.5px;transform:scaleX(0.9577);">България</span>
<span class="t" id="t72" style="left:1001.4px;top:924.1px;font-size:36.5px;transform:scaleX(0.9653);">Прикачете лист за безопасност в PDF</span>
<span class="t" id="t73" style="left:518.2px;top:999.6px;font-size:36.5px;transform:scaleX(1.0073);">Грешки и предупреждения</span>
<span class="t" id="t74" style="left:504.5px;top:1072.6px;font-size:36.5px;transform:scaleX(0.9958);">Тип</span>
<span class="t" id="t75" style="left:717.5px;top:1072.6px;font-size:36.5px;transform:scaleX(1.0000);">Код</span>
<span class="t" id="t76" style="left:886.3px;top:1072.6px;font-size:36.5px;transform:scaleX(0.9792);">Информационен лист за безопасност</span>
<span class="t" id="t77" style="left:1552.8px;top:1072.6px;font-size:36.5px;transform:scaleX(0.9855);">Описание</span>
<span class="t" id="t78" style="left:2967.1px;top:1072.6px;font-size:36.5px;transform:scaleX(0.9682);">Стойност</span>
<span class="t" id="t79" style="left:561.3px;top:1151.1px;font-size:36.5px;transform:scaleX(0.9795);">Грешка</span>
<span class="t" id="t80" style="left:714.3px;top:1151.1px;font-size:36.5px;transform:scaleX(0.9005);">BR530</span>
<span class="t" id="t81" style="left:882.2px;top:1151.1px;font-size:36.5px;transform:scaleX(0.9424);">ПРИМЕР Опасна смес</span>
<span class="t" id="t82" style="left:1547.9px;top:1151.1px;font-size:36.5px;transform:scaleX(0.9746);">Посочете цвета в част 9 "Свойства".</span>
<span class="t" id="t83" style="left:2963.0px;top:1151.1px;font-size:36.5px;transform:scaleX(0.9463);">ПРИМЕР Опасна смес</span>
<span class="t" id="t84" style="left:561.3px;top:1230.1px;font-size:36.5px;transform:scaleX(0.9795);">Грешка</span>
<span class="t" id="t85" style="left:714.3px;top:1230.1px;font-size:36.5px;transform:scaleX(0.9005);">BR534</span>
<span class="t" id="t86" style="left:882.2px;top:1230.1px;font-size:36.5px;transform:scaleX(0.9424);">ПРИМЕР Опасна смес</span>
<span class="t" id="t87" style="left:1547.9px;top:1230.1px;font-size:36.5px;transform:scaleX(0.9652);">Попълнете EuPCS (основната предвидена употреба) в раздел "Идентификация".</span>
<span class="t" id="t88" style="left:2963.0px;top:1230.1px;font-size:36.5px;transform:scaleX(0.9463);">ПРИМЕР Опасна смес</span>
<span class="t" id="t89" style="left:671.0px;top:1818.9px;font-size:36.5px;transform:scaleX(0.9167);">Excel</span>
<span class="t" id="t90" style="left:1072.4px;top:1818.9px;font-size:36.5px;transform:scaleX(0.9517);">Досие за PCN</span>
<div class="clip" style="left:2497px;top:1800px;width:449px;height:68px"><span class="t" id="t91" style="left:16.3px;top:18.9px;font-size:36.5px;transform:scaleX(0.9508);"><span class="pre">Изп</span>рати известие онлайн (S<span style="font-size:0.62em;position:relative;top:0.22em">2</span>S<span class="suf">)</span></span></div>
<span class="t" id="t92" style="left:3150.0px;top:1818.6px;font-size:36.5px;transform:scaleX(0.9922);">Отмени</span>
</body></html>
